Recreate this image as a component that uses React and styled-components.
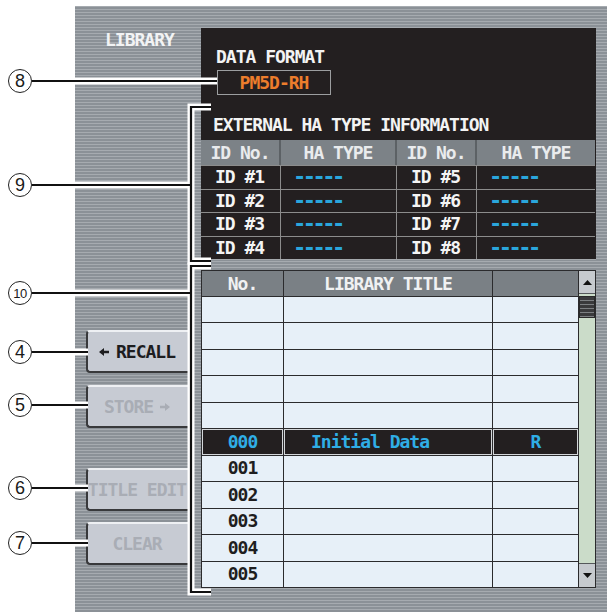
import React from "react";
import styled, { createGlobalStyle } from "styled-components";

const GlobalStyle = createGlobalStyle`
  html, body { margin: 0; padding: 0; background: #fff; }
  body { font-family: "DejaVu Sans Mono", "Liberation Mono", monospace; }
`;

const Page = styled.div`
  position: relative;
  width: 607px;
  height: 612px;
  padding: 6px 0 0 75px;
  box-sizing: border-box;
  overflow: hidden;
`;

const Panel = styled.div`
  height: 606px;
  display: grid;
  grid-template-columns: 126px 395px;
  background: repeating-linear-gradient(to bottom, #a6abb0 0 1px, #8b9197 1px 3px);
`;

const Side = styled.div`
  display: flex;
  flex-direction: column;
  padding: 24px 0 0 11px;
`;

const Txt = styled.span`
  font-family: "DejaVu Sans Mono", "Liberation Mono", monospace;
  font-weight: bold;
  font-size: 18px;
  letter-spacing: -1px;
  line-height: 20px;
  white-space: nowrap;
`;

const Dash = styled(Txt)`
  font-size: 22px;
  letter-spacing: -3.5px;
`;

const Label = styled(Txt)`
  display: block;
  margin-left: 19px;
  color: #f2f3f4;
`;

const ButtonGroup = styled.div`
  display: flex;
  flex-direction: column;
  gap: ${(p) => p.$gap}px;
  margin-top: ${(p) => p.$top}px;
`;

const SideButton = styled.div`
  width: 108px;
  height: 43px;
  box-sizing: border-box;
  background: #c7cbd3;
  border-left: 2px solid #38393b;
  border-bottom: 2px solid #38393b;
  border-top: 2px solid #eef0f3;
  border-radius: 4px 0 0 4px;
  display: flex;
  align-items: center;
  justify-content: center;
  gap: 7px;
  padding-right: 8px;
  overflow: hidden;
  color: ${(p) => (p.$disabled ? "#a9adb5" : "#1d1d1f")};
`;

const Main = styled.div`
  display: flex;
  flex-direction: column;
  gap: 10px;
  padding-top: 22px;
`;

const DarkBox = styled.div`
  height: 232px;
  background: #231f20;
  display: flex;
  flex-direction: column;
  border-bottom: 1px solid #a4a8ac;
  box-sizing: border-box;
`;

const BoxTitle = styled(Txt)`
  display: block;
  color: #f3f3f3;
  margin: ${(p) => p.$m};
`;

const FormatBox = styled.div`
  width: 114px;
  height: 25px;
  box-sizing: border-box;
  margin: 3px 0 0 16px;
  border: 1px solid #9c9ea0;
  display: flex;
  align-items: center;
  justify-content: center;
  color: #ec7d2c;
`;

const HaGrid = styled.div`
  margin-top: 5px;
  display: grid;
  grid-template-columns: 80px 116px 80px 118px;
  grid-template-rows: 25px repeat(4, 1fr);
  flex: 1;
`;

const HaHead = styled.div`
  background: #7c8287;
  color: #e9ebed;
  display: flex;
  align-items: center;
  justify-content: center;
  border-right: ${(p) => (p.$last ? "none" : "2px solid #5c6165")};
`;

const HaCell = styled.div`
  display: flex;
  align-items: center;
  padding-left: ${(p) => (p.$dash ? 12 : 14)}px;
  border-top: 1px solid #8c8c8c;
  border-right: ${(p) => (p.$last ? "none" : "1px solid #8c8c8c")};
  color: ${(p) => (p.$dash ? "#2aa6dc" : "#f4f4f4")};
`;

const LibTable = styled.div`
  height: 318px;
  display: flex;
  gap: 1px;
  padding: 1px;
  box-sizing: border-box;
  background: #2b2b2d;
`;

const LibGrid = styled.div`
  display: grid;
  grid-template-columns: 81px 208px 85px;
  grid-template-rows: 25px repeat(11, 1fr);
  gap: 1px;
`;

const LibHead = styled.div`
  background: #7a8085;
  color: #f0f1f2;
  display: flex;
  align-items: center;
  justify-content: center;
`;

const LibCell = styled.div`
  display: flex;
  align-items: center;
  justify-content: ${(p) => (p.$left ? "flex-start" : "center")};
  padding-left: ${(p) => (p.$left ? 27 : 0)}px;
  background: ${(p) => (p.$active ? "#231f20" : "#e7f0f8")};
  box-shadow: ${(p) => (p.$active ? "inset 0 0 0 1px #d4d7da" : "none")};
  color: ${(p) => (p.$active ? "#2faee6" : "#1e1e20")};
`;

const Scroll = styled.div`
  width: 17px;
  display: flex;
  flex-direction: column;
  background: #cbdcc9;
`;

const ScrollButton = styled.div`
  height: ${(p) => p.$h}px;
  background: #c6cace;
  display: flex;
  align-items: center;
  justify-content: center;
  border-bottom: ${(p) => (p.$top ? "1px solid #55585a" : "none")};
  border-top: ${(p) => (p.$top ? "none" : "1px solid #55585a")};
  margin-top: ${(p) => (p.$top ? 0 : "auto")};
`;

const Thumb = styled.div`
  height: 22px;
  margin-top: 2px;
  background: repeating-linear-gradient(to bottom, #3a3a3c 0 3px, #7d8083 3px 4px);
  border: 1px solid #2a2a2a;
  box-sizing: border-box;
`;

const Overlay = styled.svg`
  position: absolute;
  left: 0;
  top: 0;
  pointer-events: none;
`;

const Badge = styled.div`
  position: absolute;
  left: 8px;
  top: ${(p) => p.$y - 12}px;
  width: 24px;
  height: 24px;
  box-sizing: border-box;
  border: 1px solid #222;
  border-radius: 50%;
  background: #fff;
  display: flex;
  align-items: center;
  justify-content: center;
  font-family: "Liberation Sans", Arial, sans-serif;
  font-size: ${(p) => (p.$small ? 13 : 18)}px;
  letter-spacing: ${(p) => (p.$small ? -0.5 : 0)}px;
  color: #1a1a1a;
`;

const Arrow = ({ dir, color }) => (
  <svg width="10" height="8" viewBox="0 0 10 8">
    <path
      d={dir === "left" ? "M0 4 L5 0 L5 2.8 L10 2.8 L10 5.2 L5 5.2 L5 8 Z" : "M10 4 L5 0 L5 2.8 L0 2.8 L0 5.2 L5 5.2 L5 8 Z"}
      fill={color}
    />
  </svg>
);

const Tri = ({ up }) => (
  <svg width="9" height="5" viewBox="0 0 9 5">
    <polygon points={up ? "4.5,0 9,5 0,5" : "0,0 9,0 4.5,5"} fill="#111" />
  </svg>
);

const HA_ROWS = [
  ["ID #1", "ID #5"],
  ["ID #2", "ID #6"],
  ["ID #3", "ID #7"],
  ["ID #4", "ID #8"],
];

const LIB_ROWS = [
  {}, {}, {}, {}, {},
  { no: "000", title: "Initial Data", flag: "R", active: true },
  { no: "001" }, { no: "002" }, { no: "003" }, { no: "004" }, { no: "005" },
];

const CALLOUTS = [
  { n: "8", y: 81, x2: 217 },
  { n: "9", y: 185, x2: 191 },
  { n: "10", y: 293, x2: 191 },
  { n: "4", y: 352, x2: 88 },
  { n: "5", y: 405, x2: 88 },
  { n: "6", y: 488, x2: 88 },
  { n: "7", y: 543, x2: 88 },
];

const BRACKETS = [
  { y1: 107, y2: 261 },
  { y1: 266, y2: 592 },
];

const paths = [
  ...CALLOUTS.map((c) => `M32 ${c.y} H${c.x2}`),
  ...BRACKETS.map((b) => `M211 ${b.y1} H191 V${b.y2} H211`),
];

export default function App() {
  return (
    <>
      <GlobalStyle />
      <Page>
        <Panel>
          <Side>
            <Label>LIBRARY</Label>
            <ButtonGroup $top={280} $gap={12}>
              <SideButton>
                <Arrow dir="left" color="#1d1d1f" />
                <Txt>RECALL</Txt>
              </SideButton>
              <SideButton $disabled>
                <Txt>STORE</Txt>
                <Arrow dir="right" color="#a9adb5" />
              </SideButton>
            </ButtonGroup>
            <ButtonGroup $top={40} $gap={11}>
              <SideButton $disabled>
                <Txt>TITLE EDIT</Txt>
              </SideButton>
              <SideButton $disabled>
                <Txt>CLEAR</Txt>
              </SideButton>
            </ButtonGroup>
          </Side>

          <Main>
            <DarkBox>
              <BoxTitle $m="19px 0 0 15px">DATA FORMAT</BoxTitle>
              <FormatBox>
                <Txt>PM5D-RH</Txt>
              </FormatBox>
              <BoxTitle $m="20px 0 0 12px">EXTERNAL HA TYPE INFORMATION</BoxTitle>
              <HaGrid>
                <HaHead><Txt>ID No.</Txt></HaHead>
                <HaHead><Txt>HA TYPE</Txt></HaHead>
                <HaHead><Txt>ID No.</Txt></HaHead>
                <HaHead $last><Txt>HA TYPE</Txt></HaHead>
                {HA_ROWS.map(([a, b]) => (
                  <React.Fragment key={a}>
                    <HaCell><Txt>{a}</Txt></HaCell>
                    <HaCell $dash><Dash>-----</Dash></HaCell>
                    <HaCell><Txt>{b}</Txt></HaCell>
                    <HaCell $dash $last><Dash>-----</Dash></HaCell>
                  </React.Fragment>
                ))}
              </HaGrid>
            </DarkBox>

            <LibTable>
              <LibGrid>
                <LibHead><Txt>No.</Txt></LibHead>
                <LibHead><Txt>LIBRARY TITLE</Txt></LibHead>
                <LibHead />
                {LIB_ROWS.map((r, i) => (
                  <React.Fragment key={i}>
                    <LibCell $active={r.active}><Txt>{r.no}</Txt></LibCell>
                    <LibCell $active={r.active} $left><Txt>{r.title}</Txt></LibCell>
                    <LibCell $active={r.active}><Txt>{r.flag}</Txt></LibCell>
                  </React.Fragment>
                ))}
              </LibGrid>
              <Scroll>
                <ScrollButton $top $h={22}><Tri up /></ScrollButton>
                <Thumb />
                <ScrollButton $h={23}><Tri /></ScrollButton>
              </Scroll>
            </LibTable>
          </Main>
        </Panel>

        <Overlay width="607" height="612">
          {paths.map((d, i) => (
            <path key={`w${i}`} d={d} stroke="#fff" strokeWidth="7" fill="none" />
          ))}
          {paths.map((d, i) => (
            <path key={`b${i}`} d={d} stroke="#111" strokeWidth="2.2" fill="none" />
          ))}
        </Overlay>
        {CALLOUTS.map((c) => (
          <Badge key={c.n} $y={c.y} $small={c.n.length > 1}>
            {c.n}
          </Badge>
        ))}
      </Page>
    </>
  );
}
